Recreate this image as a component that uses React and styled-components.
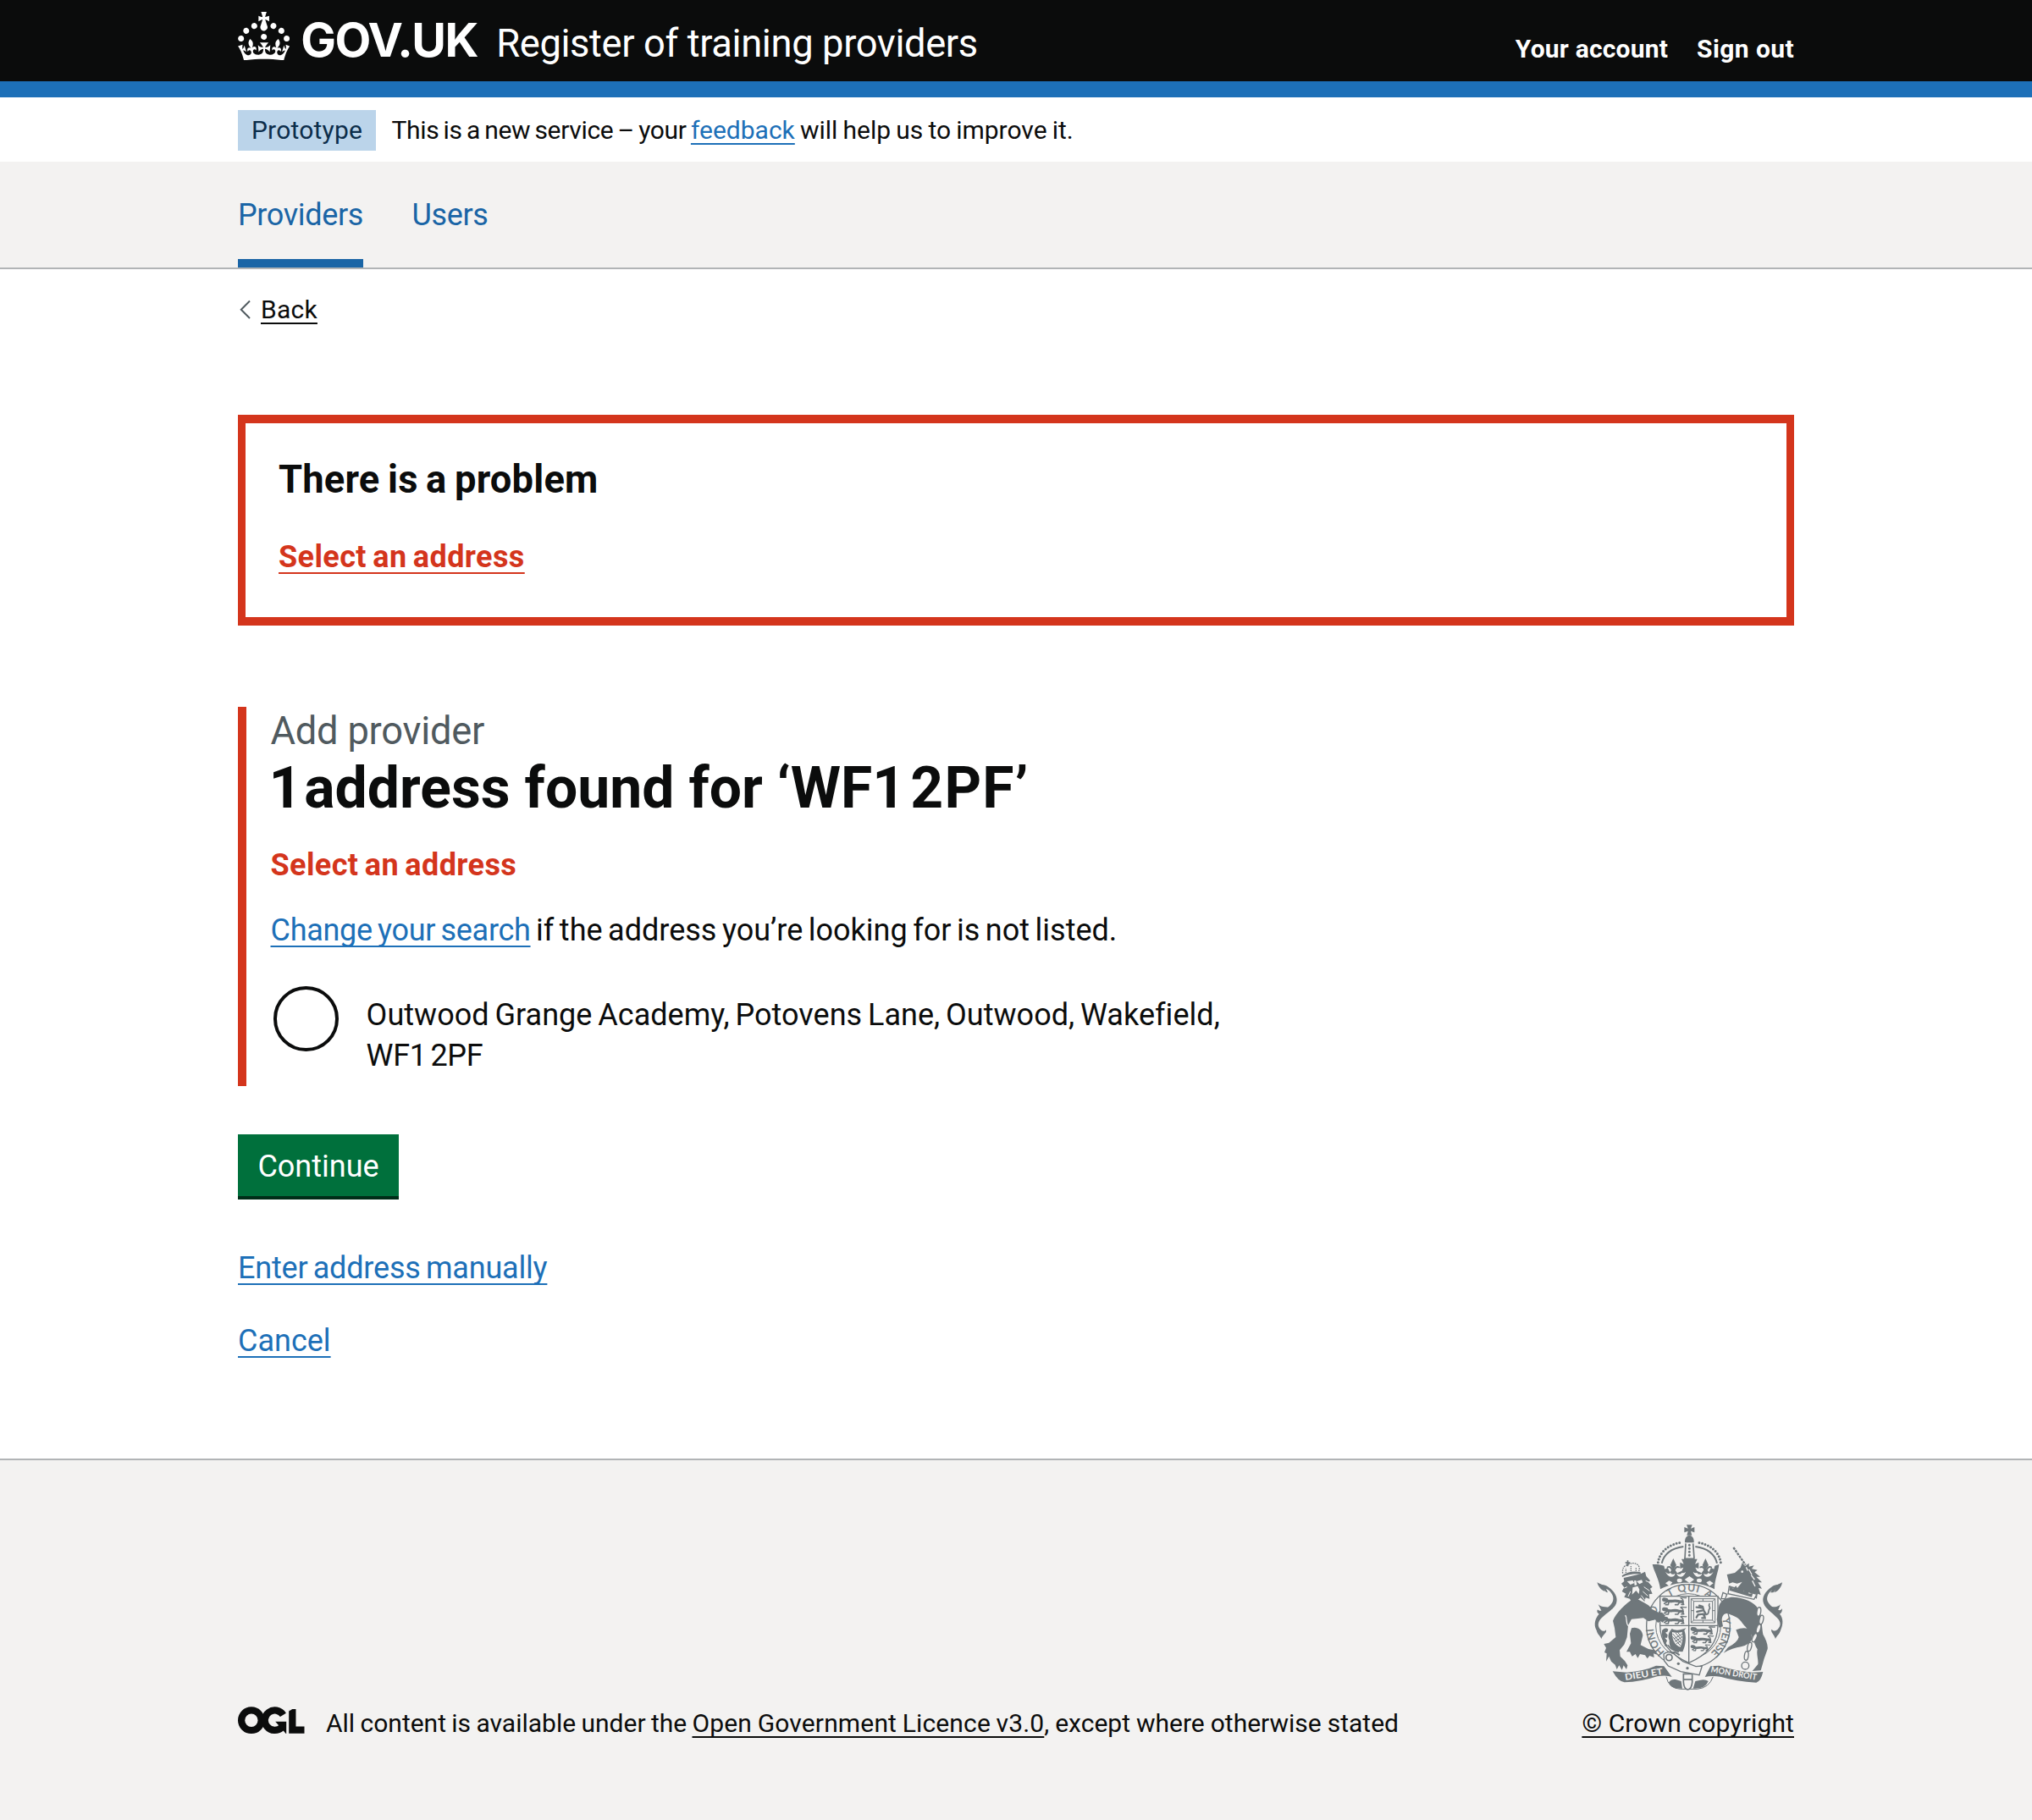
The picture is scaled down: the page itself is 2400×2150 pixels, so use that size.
import React from "react";
import styled, { createGlobalStyle } from "styled-components";

const INK = "#0b0c0c";
const BLUE = "#1d70b8";
const NAV_BLUE = "#1a65a6";
const RED = "#d4351c";
const GREY = "#f3f2f1";
const BORDER = "#b1b4b6";
const CREST = "#6f777b";

const GlobalStyle = createGlobalStyle`
  *, *::before, *::after { box-sizing: border-box; }
  html { background: ${GREY}; }
  body {
    margin: 0;
    background: #fff;
    color: ${INK};
    font-family: Roboto, "Liberation Sans", sans-serif;
    font-size: 36px;
    line-height: 48px;
    -webkit-font-smoothing: antialiased;
  }
  h1, h2, p { margin: 0; font: inherit; }
`;

const Container = styled.div`
  width: 1838px;
  margin: 0 auto;
`;

/* Text run with tracking and word gap adjustments */
const Run = styled.span`
  letter-spacing: ${(p) => p.$ls || 0}px;
  word-spacing: ${(p) => p.$ws || 0}px;
  white-space: ${(p) => (p.$wrap ? "normal" : "pre")};
`;

const Link = styled.a`
  color: ${(p) => p.$color || BLUE};
  letter-spacing: ${(p) => p.$ls || 0}px;
  word-spacing: ${(p) => p.$ws || 0}px;
  text-decoration: underline;
  text-decoration-thickness: 2px;
  text-decoration-skip-ink: none;
  text-underline-offset: ${(p) => (p.$small ? 5 : 6)}px;
  white-space: nowrap;
`;

/* Header */
const Header = styled.header`
  height: 115px;
  background: ${INK};
  border-bottom: 19px solid ${BLUE};
  color: #fff;
`;
const HeaderRow = styled(Container)`
  display: flex;
  align-items: flex-start;
`;
const CrownIcon = styled.svg`
  width: 61.3px;
  height: 57.4px;
  margin-top: 13.5px;
  margin-right: 12.9px;
  fill: #fff;
`;
const Wordmark = styled.span`
  width: 231px;
  padding-top: 17px;
  font: 700 55.6px/60px Inter, sans-serif;
  letter-spacing: -1.5px;
`;
const ServiceName = styled.span`
  padding-top: 23px;
  font-size: 45.3px;
  line-height: 57px;
  letter-spacing: -0.37px;
  white-space: nowrap;
`;
const AccountNav = styled.nav`
  display: flex;
  gap: 34px;
  margin-left: auto;
  padding-top: 39px;
  font-size: 30px;
  font-weight: 700;
  line-height: 38px;
`;

/* Phase banner */
const PhaseBanner = styled(Container)`
  display: flex;
  height: 76px;
  padding-top: 15px;
  font-size: 30px;
  line-height: 47px;
`;
const Tag = styled.strong`
  width: 163px;
  height: 48px;
  margin-right: 18.5px;
  text-align: center;
  font-weight: 400;
  letter-spacing: 0.2px;
  color: #0c2d4a;
  background: #bbd4ea;
`;

/* Service navigation */
const NavBar = styled.nav`
  height: 127px;
  background: ${GREY};
  border-bottom: 2px solid ${BORDER};
`;
const NavList = styled(Container)`
  display: flex;
  gap: 57.4px;
`;
const NavItem = styled.a`
  height: 125px;
  line-height: 127px;
  letter-spacing: -0.35px;
  color: ${NAV_BLUE};
  box-shadow: ${(p) => (p.$current ? `inset 0 -10px ${NAV_BLUE}` : "none")};
`;

/* Main */
const BackRow = styled.div`
  display: flex;
  padding-top: 29px;
  font-size: 30px;
  line-height: 38px;
`;
const Chevron = styled.svg`
  width: 27px;
  height: 38px;
  fill: none;
  stroke: #505a5f;
  stroke-width: 2;
`;
const ErrorSummary = styled.section`
  height: 249px;
  margin-top: 105px;
  padding: 38px 39px 0;
  border: solid ${RED};
  border-width: 10px 9px;
`;
const SummaryTitle = styled.h2`
  margin-bottom: 39px;
  font-size: 45.3px;
  font-weight: 700;
  line-height: 57px;
`;
const Strong = styled.div`
  font-weight: 700;
`;
const FormGroup = styled.section`
  margin-top: 96px;
  padding: 0 0 12px 28.5px;
  border-left: 10px solid ${RED};
`;
const Caption = styled.div`
  font-size: 45.3px;
  line-height: 57px;
  color: #505a5f;
`;
const Heading = styled.h1`
  padding-top: 1px;
  font-size: 67.8px;
  font-weight: 700;
  line-height: 77px;
`;
const Numeral = styled.span`
  margin-left: -2px;
  letter-spacing: ${(p) => p.$ls}px;
`;
const ErrorMessage = styled.p`
  margin: 28px 0 29px;
  font-weight: 700;
  color: ${RED};
`;
const RadioItem = styled.label`
  display: flex;
  gap: 32.7px;
  width: 1160px;
  margin-top: 42px;
  padding-left: 3.8px;
`;
const RadioCircle = styled.span`
  flex: none;
  width: 76.6px;
  height: 76.6px;
  border: 4px solid ${INK};
  border-radius: 50%;
`;
const RadioLabel = styled.span`
  padding-top: 10px;
`;
const Button = styled.button`
  display: block;
  width: 190px;
  height: 77px;
  margin: 57px 0;
  padding: 0;
  border: 0;
  font: inherit;
  line-height: 75px;
  color: #fff;
  background: #00703c;
  box-shadow: inset 0 -4px #002d18;
`;
const ActionLink = styled.p`
  margin-bottom: ${(p) => p.$gap}px;
`;

/* Footer */
const Footer = styled.footer`
  height: 427px;
  border-top: 2px solid ${BORDER};
  background: ${GREY};
  font-size: 30px;
  line-height: 38px;
`;
const FooterRow = styled(Container)`
  display: flex;
  align-items: flex-end;
  padding-top: 75px;
`;
const OglIcon = styled.svg`
  width: 78.5px;
  height: 32.5px;
  margin: 0 25.5px 6px 0;
`;
const CopyrightBlock = styled.div`
  display: flex;
  flex-direction: column;
  align-items: flex-end;
  gap: 16.5px;
  margin-left: auto;
`;
const CrestIcon = styled.svg`
  width: 250.7px;
  height: 200px;
`;
const CrestText = styled.text`
  font-family: Lato, sans-serif;
  font-size: ${(p) => p.$size}px;
  font-weight: ${(p) => p.$weight || 700};
  fill: ${(p) => p.$fill || CREST};
`;

const Crown = () => (
  <CrownIcon viewBox="0 0 32 30" aria-hidden="true">
    <path d="M22.6 10.4c-1 .4-2-.1-2.4-1-.4-.9.1-2 1-2.4.9-.4 2 .1 2.4 1s-.1 2-1 2.4m-5.9 6.7c-.9.4-2-.1-2.4-1-.4-.9.1-2 1-2.4.9-.4 2 .1 2.4 1s-.1 2-1 2.4m10.8-3.7c-1 .4-2-.1-2.4-1-.4-.9.1-2 1-2.4.9-.4 2 .1 2.4 1s0 2-1 2.4m3.3 4.8c-1 .4-2-.1-2.4-1-.4-.9.1-2 1-2.4.9-.4 2 .1 2.4 1s-.1 2-1 2.4M17 4.7l2.3 1.2V2.5l-2.3.7-.2-.2.9-3h-3.4l.9 3-.2.2c-.1.1-2.3-.7-2.3-.7v3.4L15 4.7c.1.1.1.2.2.2l-1.3 4c-.1.2-.1.4-.1.6 0 1.1.8 2 1.9 2.2h.7c1-.2 1.9-1.1 1.9-2.1 0-.2 0-.4-.1-.6l-1.3-4c-.1-.2 0-.2.1-.3m-7.6 5.7c.9.4 2-.1 2.4-1 .4-.9-.1-2-1-2.4-.9-.4-2 .1-2.4 1s0 2 1 2.4m-5 3c.9.4 2-.1 2.4-1 .4-.9-.1-2-1-2.4-.9-.4-2 .1-2.4 1s.1 2 1 2.4m-3.2 4.8c.9.4 2-.1 2.4-1 .4-.9-.1-2-1-2.4-.9-.4-2 .1-2.4 1s0 2 1 2.4m14.8 11c4.4 0 8.6.3 12.3.8 1.1-4.5 2.4-7 3.7-8.8l-2.5-.9c.2 1.3.3 1.9 0 2.7-.4-.4-.8-1.1-1.1-2.3l-1.2 4c.7-.5 1.3-.8 2-.9-1.1 2.5-2.6 3.1-3.5 3-1.1-.2-1.7-1.2-1.5-2.1.3-1.2 1.5-1.5 2.1-.1 1.1-2.3-.8-3-2-2.3 1.9-1.9 2.1-3.5.6-5.6-2.1 1.6-2.1 3.2-1.2 5.5-1.2-1.4-3.2-.6-2.5 1.6.9-1.4 2.1-.5 1.9.8-.2 1.1-1.7 2.1-3.5 1.9-2.7-.2-2.9-2.1-2.9-3.6.7-.1 1.9.5 2.9 1.9l.4-4.3c-1.1 1.1-2.1 1.4-3.2 1.4.4-1.2 2.1-3 2.1-3h-5.4s1.7 1.9 2.1 3c-1.1 0-2.1-.2-3.2-1.4l.4 4.3c1-1.4 2.2-2 2.9-1.9-.1 1.5-.2 3.4-2.9 3.6-1.9.2-3.4-.8-3.5-1.9-.2-1.3 1-2.2 1.9-.8.7-2.3-1.2-3-2.5-1.6.9-2.2.9-3.9-1.2-5.5-1.5 2-1.3 3.7.6 5.6-1.2-.7-3.1 0-2 2.3.6-1.4 1.8-1.1 2.1.1.2.9-.3 1.9-1.5 2.1-.9.2-2.4-.5-3.5-3 .6 0 1.2.3 2 .9l-1.2-4c-.3 1.1-.7 1.9-1.1 2.3-.3-.8-.2-1.4 0-2.7l-2.9.9C1.3 23 2.6 25.5 3.7 30c3.7-.5 7.9-.8 12.3-.8" />
  </CrownIcon>
);

/* Licence mark: two interlocking rings with a crossbar and an angled foot */
const Ogl = () => (
  <OglIcon viewBox="0 0 483.2 195.7" aria-label="OGL">
    <g fill="none" stroke={INK} strokeWidth="50.7">
      <circle cx="97.8" cy="97.8" r="72.4" />
      <path d="M329 58.5A72.4 72.4 0 1 0 318 150" />
      <path d="M396 16V168.2H483.2" />
    </g>
    <path fill={INK} d="M272 107.5h80v87.8h-3L272 107.5z" />
    <path fill={GREY} d="M368 -2h56L370.8 32.4z" />
  </OglIcon>
);

const PASSANT_ROWS = [0, 34, 67];
const CHAIN_LINKS = [
  [653, 372, 8],
  [662, 400, 12],
  [652, 432, 18],
  [638, 464, 24],
  [620, 496, 14],
  [609, 528, 8],
];

/* One walking lion inside a shield quarter, about 90 by 30 units */
const PassantLion = ({ x, y, scale = 1 }) => (
  <g transform={`translate(${x} ${y}) scale(${scale})`} fill="none" stroke={CREST} strokeLinecap="round" strokeLinejoin="round">
    <path d="M18 13C32 18 44 10 58 15C66 18 70 14 73 17" strokeWidth="10" />
    <path d="M7 9L15 10" strokeWidth="14" />
    <path d="M20 16L8 23M24 18L22 27H13M62 18L56 27H47M72 17L77 26H69" strokeWidth="5" />
    <path d="M74 14C78 6 66 6 66 2C74 0 80 4 86 2" strokeWidth="4" />
  </g>
);

const Crest = () => (
  <CrestIcon viewBox="25 60 752 600" aria-hidden="true">
    <defs>
      <path id="motto" d="M403 547A124 124 0 0 1 403 299A124 124 0 0 1 403 547" />
    </defs>

    {/* Garter */}
    <circle cx="403" cy="423" r="148" fill={GREY} stroke={CREST} strokeWidth="4" />
    <circle cx="403" cy="423" r="115" fill="none" stroke={CREST} strokeWidth="3" />
    <g stroke={CREST}>
      <CrestText $size={36} $weight={400}><textPath href="#motto" startOffset="92">HONI</textPath></CrestText>
      <CrestText $size={36} $weight={400}><textPath href="#motto" startOffset="214">SO</textPath></CrestText>
      <CrestText $size={34} $weight={400}><textPath href="#motto" startOffset="318">T</textPath></CrestText>
      <CrestText $size={36} $weight={400}><textPath href="#motto" startOffset="354" textLength="72">QUI</textPath></CrestText>
      <CrestText $size={34} $weight={400}><textPath href="#motto" startOffset="448">A</textPath></CrestText>
      <CrestText $size={36} $weight={400}><textPath href="#motto" startOffset="556" textLength="136">Y PENSE</textPath></CrestText>
    </g>

    {/* Shield */}
    <path d="M303 317H508V420C508 480 470 525 405 553C340 525 303 480 303 420z" fill={GREY} stroke={CREST} strokeWidth="4" />
    <path d="M405 317V553M303 421H508" stroke={CREST} strokeWidth="4" />
    {PASSANT_ROWS.map((dy) => <PassantLion key={dy} x={310} y={320 + dy} />)}
    <PassantLion x={411} y={424} />
    <PassantLion x={411} y={456} scale={0.94} />
    <PassantLion x={411} y={488} scale={0.8} />
    <path d="M413 326H498V411H413zM422 335H489V402H422z" fill="none" stroke={CREST} strokeWidth="3" />
    <path d="M413 326l9 9M498 326l-9 9M413 411l9-9M498 411l-9-9M455 326v9M455 402v9M413 368h9M489 368h9" stroke={CREST} strokeWidth="3" />
    <g fill="none" stroke={CREST} strokeLinecap="round" strokeWidth="7">
      <path d="M442 350l12 4 4 14 6 10-6 8M450 358l-18-2M452 368l-18 4M456 380l-18 2-6 10M460 384l2 10h-10" />
      <path d="M466 382c14-2 6-14 12-20s-6-10 0-18" strokeWidth="5" />
    </g>
    <path d="M345 432c12 8 28 6 50-2l-6 8c8 20 6 50-6 76l-9-1c-8-2-22-2-28-10-10-8-10-18-10-30-8-16-1-30 9-41z" fill={CREST} />
    <path d="M346 444c14 4 26 2 35-1 4 18 2 38-6 54-20-6-30-26-29-53z" fill={GREY} />
    <path d="M348 450l30 34M347 460l28 32M358 447l22 26M366 446l15 16M382 450l-30 18M381 462l-26 16M379 474l-18 11" stroke={CREST} strokeWidth="3" />
    <path d="M310 438q12-12 22-4l-2 8-8 4 8 8-2 10-8 0 8 10-4 10 6 8-8 4q-14-24-12-58z" fill={CREST} />
    <path d="M330 490q14 20 40 24" fill="none" stroke={CREST} strokeWidth="5" />

    {/* Royal crown */}
    <path d="M397 64h20l-5 13 13-5v19l-13-5 4 15h-18l4-15-13 5V72l13 5z" fill={CREST} />
    <path d="M407 101c12 2 17 12 16 26h-32c-1-14 4-24 16-26z" fill={CREST} />
    <path d="M394 130l-3 54M420 130l4 54M388 184h38" stroke={CREST} strokeWidth="5" fill="none" />
    <path d="M407 136V180" stroke={CREST} strokeWidth="9" strokeLinecap="round" strokeDasharray="0 12" />
    <path d="M296 197C302 158 337 131 382 126M518 197C512 158 477 131 432 126" fill="none" stroke={CREST} strokeWidth="9" strokeLinecap="round" strokeDasharray="0 11" />
    <path d="M309 200C317 168 344 147 386 141M505 200C497 168 470 147 428 141" fill="none" stroke={CREST} strokeWidth="6" />
    <path d="M296 204l21 5 3 12 10-5 8 16 9-13-8-12 11-24 11 24-8 12 11 16 16-8 6-12-12 4v-22l13 6-8-18h56l-8 18 13-6v22l-12-4 6 12 16 8 11-16-8-12 11-24 11 24-8 12 9 13 8-16 10 5 3-12 15-5c-2 27-16 52-16 88-56-30-136-30-192 0-4-36-22-61-28-88z" fill={CREST} />
    <path d="M330 214q10-4 15 8M370 214q-10-4-15 8M446 214q10-4 15 8M484 214q-10-4-15 8" fill="none" stroke={CREST} strokeWidth="6" strokeLinecap="round" />
    <g fill={GREY}>
      <path d="M322 230q8 16 20 18 14 0 14-12-10 8-16-2-8 8-18-4zM394 230q-4 14-16 18-14 0-16-12 12 8 18-2 8 2 14-4zM420 230q4 14 16 18 14 0 16-12-12 8-18-2-8 2-14-4zM492 230q-8 16-20 18-14 0-14-12 10 8 16-2 8 8 18-4z" />
      <path d="M407 246l17 12-17 12-17-12z" />
      <ellipse cx="372" cy="261" rx="9" ry="7" />
      <ellipse cx="442" cy="261" rx="9" ry="7" />
      <path d="M322 271l13-9 12 6-11 13zM492 271l-13-9-12 6 11 13z" />
    </g>

    {/* Lion */}
    <path d="M80 268c8 10 25 6 40 16 22 16 35 36 28 58-7 20-35 34-52 52-14 14-16 30-3 42 7 6 15 6 18 0 6 10-10 16-16 32-5-12-14-16-17-30-12-22-4-44 9-58-7-4-9-10-5-16 5 7 14 6 26-4l10-4c14-10 24-25 17-42-6-14-18-24-33-26l6 12c-14-4-24-18-28-32z" fill={CREST} />
    <path d="M80 268l28 14 10 22-6-2zM84 346c12 12 34 8 52 14l-36 18z" fill={CREST} />
    <path d="M215 322C236 336 262 344 274 362L300 376 310 374 322 386 316 392 322 400 312 410 304 404 296 412 286 400 262 406 244 394 224 396 202 398 190 420 186 462 176 488 160 508 162 530 178 546 188 562 184 576 174 562 168 578 158 562 150 576 144 560 130 548 122 530 112 548 114 520 106 516 112 500 104 486 122 482 146 462 142 430 136 404C148 376 176 346 215 322z" fill={CREST} />
    <path d="M202 430C222 424 240 436 242 456L234 490 262 504 284 508 292 524 280 520 282 534 266 528 258 538 250 526 232 522 224 536 216 522 204 530 196 514 184 514 200 484 196 450z" fill={CREST} />
    <path d="M180 384c8 12 0 26 10 38" fill="none" stroke={GREY} strokeWidth="4" />
    <path d="M174 252l16-4 44-10 16-8 4 16 14 16-6 6 14 16-8 6 8 18-12 2 2 16-14-4-4 14-14-14-10 8-18 14-10-18-20-6 6-12-14-8 8-14-10-14 10-8z" fill={CREST} />
    <path d="M186 264l20-3 6 9-14 6zM220 264l18-5 4 9-12 6zM206 286l18-5 6 12-2 16-10-12-14 14zM211 262l7-1 3 16-8 2z" fill={GREY} />
    <path d="M246 284l20 14M242 300l18 16M236 314l14 18M198 300l-8 18M186 284l-10 4M252 262l14 6" stroke={GREY} strokeWidth="3" />
    <path d="M171 236q-4-24 16-30 22-12 38 0 8 10 2 26" fill="none" stroke={CREST} strokeWidth="4" strokeDasharray="5 3" />
    <path d="M168 244q28-20 66-12l1 7q-34-4-66 10zM186 190h5v6h6v5h-6v10h-6v-10h-5v-5h6z" fill={CREST} />
    <path d="M182 234v-16M200 228v-20M218 228v-14" stroke={CREST} strokeWidth="4" strokeDasharray="4 3" />

    {/* Unicorn */}
    <path d="M563 144L606 206" stroke={CREST} strokeWidth="7" strokeDasharray="9 3" />
    <path d="M540 240l28-6 20-18 6-18 10 12 14-10 0 12 18-4-8 12 20 4-10 8 20 16-14 0 20 20-14 0 14 22-12-2 8 24-12-4-2 18-14-8-28-8-26-2-12 6 6-20 22-28-18 6-16-4-12 4z" fill={CREST} />
    <path d="M618 222l10 18M626 242l12 16M630 262l10 20M608 214l6 12" stroke={GREY} strokeWidth="4" />
    <circle cx="594" cy="230" r="4" fill={GREY} />
    <path d="M548 282l98 28-10 18-92-20z" fill={GREY} stroke={CREST} strokeWidth="4" />
    <path d="M548 296l4-16 10 10 10-10 8 14 12-8 8 14 12-6 6 14 14-2-4 14z" fill={CREST} />
    <path d="M512 350C520 326 550 316 578 322 616 328 646 345 656 372 664 400 664 430 668 452 678 470 686 488 684 504 678 522 672 536 668 552L660 580 630 582 650 558C652 540 644 525 648 505 640 495 638 480 630 462 622 440 602 424 590 406 576 388 556 384 542 378 528 376 522 390 522 402L526 424 512 428 504 400z" fill={CREST} />
    <path d="M526 304l14 6-6 16-14 0z" fill="none" stroke={CREST} strokeWidth="4" />
    <path d="M572 436Q600 424 622 434L630 468Q618 490 590 496 560 500 528 518L544 498Q578 480 582 462z" fill={CREST} />
    <path d="M736 268c-8 10-24 6-38 16-22 16-36 36-28 58 7 20 32 34 48 52 14 14 14 28 2 40-7 6-15 8-22 0-4 10 8 16 14 34 5-12 14-16 18-30 10-22 10-44-3-58 7-4 9-10 9-20-5 9-14 8-26 0l-10-6c-12-10-22-22-16-38 6-14 16-24 29-24l-6 12c14-4 26-18 29-36z" fill={CREST} />
    <path d="M736 268l-28 14-14 22 10 0zM730 346c-12 12-26 8-42 10l30 18z" fill={CREST} />
    {CHAIN_LINKS.map(([x, y, angle]) => (
      <ellipse key={y} cx={x} cy={y} rx="7" ry="16" transform={`rotate(${angle} ${x} ${y})`} fill={GREY} stroke={CREST} strokeWidth="4" />
    ))}
    <circle cx="605" cy="563" r="13" fill={GREY} stroke={CREST} strokeWidth="4" />

    {/* Strap and pendant */}
    <path d="M325 602q8 42 50 44h60q42-4 56-44z" fill={GREY} />
    <path d="M325 602q8 42 50 44h60q42-4 56-44" fill="none" stroke={CREST} strokeWidth="3" />
    <path d="M334 622q8-12 24-10l20 6 4 26q-44 2-48-22zM474 618q-12-8-28-4l-18 4-8 26q44 2 54-26z" fill={CREST} />
    <path d="M386 592v30q2 24 15 26 14-2 16-26v-30z" fill={GREY} stroke={CREST} strokeWidth="5" />
    <path d="M386 612h31" stroke={CREST} strokeWidth="5" />
    <path d="M316 522q16-14 34-2l34 28 46 18 22-2-10 32-66-12-44-20-14-18z" fill={GREY} stroke={CREST} strokeWidth="4" />
    <path d="M342 518q16-6 30 8" fill="none" stroke={CREST} strokeWidth="6" />
    <circle cx="335" cy="534" r="11" fill="none" stroke={CREST} strokeWidth="5" />
    <circle cx="368" cy="556" r="5" fill={CREST} />
    <circle cx="400" cy="572" r="5" fill={CREST} />

    {/* Motto scrolls */}
    <path d="M135 583l50 4q64-6 104-24l28 2 28 38q-20-8-52-2-60 20-116 21-22-2-42-39z" fill={CREST} />
    <path d="M668 585l-38 2q-64-6-118-24l-30 2-20 38q24-6 54-1 56 17 128 21 16-4 24-38z" fill={CREST} />
    <CrestText $size={32} $fill={GREY} transform="translate(180 615) rotate(-9)" textLength="136" lengthAdjust="spacingAndGlyphs">DIEU ET</CrestText>
    <CrestText $size={30} $fill={GREY} transform="translate(482 586) rotate(10)" textLength="164" lengthAdjust="spacingAndGlyphs">MON DROIT</CrestText>
  </CrestIcon>
);

export default function App() {
  return (
    <>
      <GlobalStyle />
      <Header>
        <HeaderRow>
          <Crown />
          <Wordmark>GOV.UK</Wordmark>
          <ServiceName>Register of training providers</ServiceName>
          <AccountNav>
            <Run $ls={0.2}>Your account</Run>
            <Run $ls={0.4}>Sign out</Run>
          </AccountNav>
        </HeaderRow>
      </Header>

      <PhaseBanner>
        <Tag>Prototype</Tag>
        <Run $ls={-0.35} $ws={-1.8}>This is a new service – your </Run>
        <Link href="#" $small>feedback</Link>
        <Run $ws={-1.3}> will help us to improve it.</Run>
      </PhaseBanner>

      <NavBar>
        <NavList>
          <NavItem $current>Providers</NavItem>
          <NavItem>Users</NavItem>
        </NavList>
      </NavBar>

      <Container as="main">
        <BackRow>
          <Chevron viewBox="0 0 27 38"><path d="M14 8.5L3.8 18.8L14 29" /></Chevron>
          <Link href="#" $small $color={INK} $ls={0.25}>Back</Link>
        </BackRow>

        <ErrorSummary>
          <SummaryTitle><Run $ls={0.2} $ws={-2}>There is a problem</Run></SummaryTitle>
          <Strong><Link href="#" $color={RED} $ls={0.4} $ws={-2}>Select an address</Link></Strong>
        </ErrorSummary>

        <FormGroup>
          <Caption><Run $ls={-0.25}>Add provider</Run></Caption>
          <Heading>
            <Numeral $ls={-6}>1</Numeral>
            <Run $ls={-8}> </Run>
            <Run $ls={0.05}>address found for ‘WF</Run>
            <Run $ls={-5.4}>1 </Run>
            <Run $ls={1.2}>2PF’</Run>
          </Heading>
          <ErrorMessage><Run $ls={0.4} $ws={-2}>Select an address</Run></ErrorMessage>
          <p>
            <Link href="#" $ls={-0.3} $ws={-2.3}>Change your search</Link>
            <Run $ws={-2.4}> if the address you’re looking for is not listed.</Run>
          </p>
          <RadioItem>
            <RadioCircle />
            <RadioLabel>
              <Run $wrap $ls={0.04} $ws={-2.2}>Outwood Grange Academy, Potovens Lane, Outwood, Wakefield, </Run>
              <Run $wrap $ls={-0.3} $ws={-4}>WF1 2PF</Run>
            </RadioLabel>
          </RadioItem>
        </FormGroup>

        <Button type="button">Continue</Button>
        <ActionLink $gap={38}><Link href="#" $ls={-0.2} $ws={-2.4}>Enter address manually</Link></ActionLink>
        <ActionLink $gap={115}><Link href="#">Cancel</Link></ActionLink>
      </Container>

      <Footer>
        <FooterRow>
          <Ogl />
          <Run $ws={-1.1}>All content is available under the </Run>
          <Link href="#" $small $color={INK} $ls={0.15} $ws={-1}>Open Government Licence v3.0</Link>
          <Run $ws={-0.45}>, except where otherwise stated</Run>
          <CopyrightBlock>
            <Crest />
            <Link href="#" $small $color={INK} $ls={0.13}>© Crown copyright</Link>
          </CopyrightBlock>
        </FooterRow>
      </Footer>
    </>
  );
}
